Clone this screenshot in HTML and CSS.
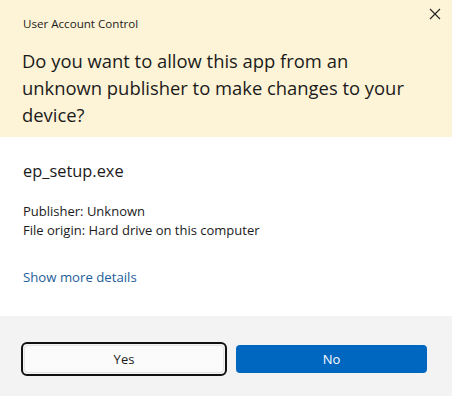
FILE: index.html
```html
<!DOCTYPE html>
<html lang="en">
<head>
  <meta charset="UTF-8" />
  <title>User Account Control</title>
  <link rel="stylesheet" href="styles.css">
</head>
<body>
<div class="dialog">
  <div class="header">
    <div class="caption">User Account Control</div>
    <button class="close-btn" aria-label="Close">
      <svg width="12" height="12" viewBox="0 0 12 12"><path d="M1 1 L11 11 M11 1 L1 11" stroke="#222" stroke-width="1.1" fill="none"/></svg>
    </button>
    <h1>Do you want to allow this app from an unknown publisher to make changes to your device?</h1>
  </div>

  <div class="content">
    <div class="app-name">ep_setup.exe</div>
    <div class="info">
      <div>Publisher: Unknown</div>
      <div>File origin: Hard drive on this computer</div>
    </div>
    <a href="#" class="more-link">Show more details</a>
  </div>

  <div class="footer">
    <div class="focus-ring"><button class="btn btn-yes">Yes</button></div>
    <button class="btn btn-no">No</button>
  </div>
</div>
</body>
</html>
```

FILE: styles.css
```css
body {
  margin: 0;
  font-family: 'Open Sans', 'Noto Sans', sans-serif;
  background-color: #fff;
  color: #1b1b1b;
}

.dialog {
  width: 452px;
  height: 396px;
  display: flex;
  flex-direction: column;
}

.header {
  position: relative;
  height: 137px;
  box-sizing: border-box;
  background-color: #fdf3d6;
  padding: 15px 22px 0 23px;
}

.caption {
  font-size: 11.6px;
  line-height: 18px;
}

.close-btn {
  position: absolute;
  top: 7px;
  right: 10px;
  width: 14px;
  height: 14px;
  padding: 0;
  border: none;
  background: none;
  display: flex;
  align-items: center;
  justify-content: center;
}

h1 {
  margin: 14px 0 0 -1px;
  font-size: 18.4px;
  font-weight: 400;
  line-height: 27px;
}

.content {
  flex: 1;
  padding: 22px 23px 0;
  font-size: 13px;
}

.app-name {
  font-size: 16.4px;
  line-height: 24px;
}

.info {
  margin-top: 19px;
  line-height: 19px;
}

.more-link {
  display: inline-block;
  margin-top: 28px;
  color: #1d5d9b;
  text-decoration: none;
  font-size: 13.2px;
}

.footer {
  height: 80px;
  background-color: #f3f3f3;
  display: flex;
  align-items: center;
  gap: 9px;
  padding: 6px 25px 0 21px;
  box-sizing: border-box;
}

.focus-ring {
  border: 2px solid #111;
  border-radius: 6px;
  padding: 1px;
  width: 200px;
}

.btn {
  height: 28px;
  border-radius: 4px;
  font-family: inherit;
  font-size: 13px;
  cursor: pointer;
}

.btn-yes {
  width: 100%;
  display: block;
  background-color: #fbfbfb;
  border: 1px solid #e5e5e5;
  color: #1b1b1b;
}

.btn-no {
  flex: 1;
  background-color: #0067c0;
  border: none;
  color: #fff;
}
```
